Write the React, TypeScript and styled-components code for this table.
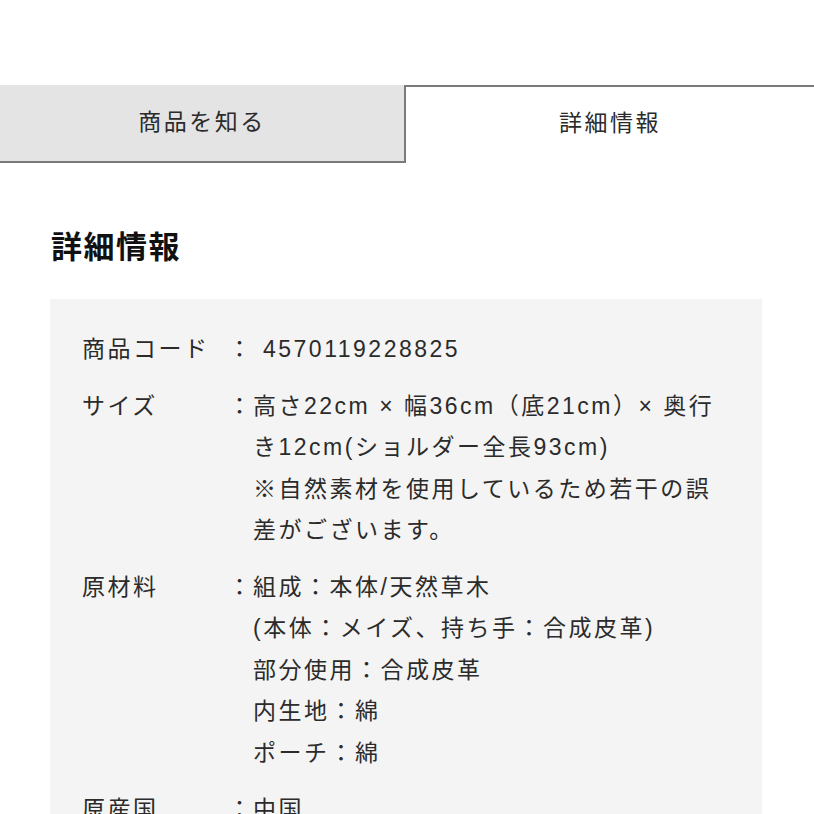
import React from "react";
import styled, { createGlobalStyle } from "styled-components";

const Global = createGlobalStyle`
  html, body { margin: 0; padding: 0; background: #fff; }
  body {
    font-family: "Liberation Sans", "Noto Sans CJK JP", sans-serif;
    color: #2b2b2b;
  }
`;

const Page = styled.div`
  padding-top: 85px;
`;

const Tabs = styled.div`
  display: grid;
  grid-template-columns: 404px 1fr;
`;

const Tab = styled.div<{ $active?: boolean }>`
  height: 78px;
  box-sizing: border-box;
  display: flex;
  align-items: center;
  justify-content: center;
  font-size: 23px;
  letter-spacing: 2.5px;
  color: #2b2b2b;
  background: ${(p) => (p.$active ? "#fff" : "#e4e4e4")};
  border-top: ${(p) => (p.$active ? "2px solid #7a7a7a" : "none")};
  border-left: ${(p) => (p.$active ? "2px solid #7a7a7a" : "none")};
  border-bottom: ${(p) => (p.$active ? "none" : "2px solid #7a7a7a")};
  padding-bottom: ${(p) => (p.$active ? "8px" : "7px")};
`;

const Content = styled.div`
  padding: 0 52px 0 50px;
`;

const Heading = styled.h2`
  margin: 70px 0 36px 1px;
  font-size: 31px;
  line-height: 30px;
  font-weight: 700;
  letter-spacing: 1.5px;
  color: #111;
`;

const InfoBox = styled.div`
  background: #f4f4f4;
  padding: 30px 36px 40px 32px;
  display: flex;
  flex-direction: column;
  gap: 15px;
`;

const Row = styled.div`
  display: grid;
  grid-template-columns: 146px 25px 1fr;
  font-size: 23px;
  line-height: 41.5px;
  letter-spacing: 2.5px;
  color: #2b2b2b;
`;

const Label = styled.div``;

const Colon = styled.div``;

const Value = styled.div<{ $indent?: number }>`
  padding-left: ${(p) => p.$indent ?? 0}px;
`;

type Item = { label: string; lines: string[]; indent?: number };

const items: Item[] = [
  { label: "商品コード", lines: ["4570119228825"], indent: 10 },
  {
    label: "サイズ",
    lines: [
      "高さ22cm × 幅36cm（底21cm）× 奥行",
      "き12cm(ショルダー全長93cm)",
      "※自然素材を使用しているため若干の誤",
      "差がございます。",
    ],
  },
  {
    label: "原材料",
    lines: [
      "組成：本体/天然草木",
      "(本体：メイズ、持ち手：合成皮革)",
      "部分使用：合成皮革",
      "内生地：綿",
      "ポーチ：綿",
    ],
  },
  { label: "原産国", lines: ["中国"] },
];

export default function App() {
  return (
    <Page>
      <Global />
      <Tabs>
        <Tab>商品を知る</Tab>
        <Tab $active>詳細情報</Tab>
      </Tabs>
      <Content>
        <Heading>詳細情報</Heading>
        <InfoBox>
          {items.map((it) => (
            <Row key={it.label}>
              <Label>{it.label}</Label>
              <Colon>：</Colon>
              <Value $indent={it.indent}>
                {it.lines.map((l, i) => (
                  <div key={i}>{l}</div>
                ))}
              </Value>
            </Row>
          ))}
        </InfoBox>
      </Content>
    </Page>
  );
}
